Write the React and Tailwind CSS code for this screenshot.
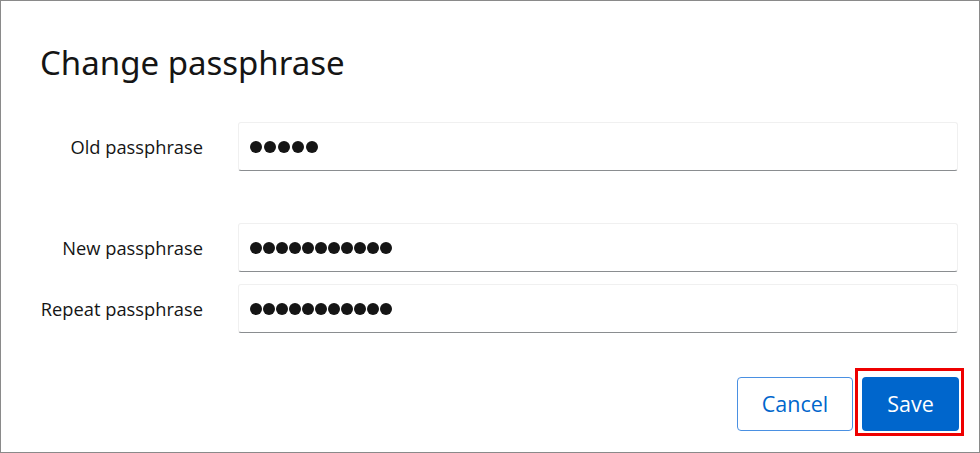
import React from "react";

function Dots({ n, gap }) {
  return (
    <div className={`flex ${gap}`}>
      {Array.from({ length: n }).map((_, i) => (
        <div key={i} className="w-[12px] h-[12px] rounded-full bg-[#151515] flex-none" />
      ))}
    </div>
  );
}

function Field({ label, n, gap }) {
  return (
    <div className="flex items-center">
      <div className="w-[164px] flex-none text-right text-[18.3px] text-[#151515]">{label}</div>
      <div className="ml-[35px] w-[720px] flex-none h-[49px] border border-[#f0f0f0] border-b-[#8a8d90] rounded-[3px] flex items-center pl-[11px] bg-white">
        <Dots n={n} gap={gap} />
      </div>
    </div>
  );
}

export default function App() {
  return (
    <div
      className="w-[980px] h-[453px] border border-[#8a8a8a] bg-white flex flex-col pl-[38px] box-border"
      style={{ fontFamily: '"Open Sans", "Noto Sans", sans-serif' }}
    >
      <h1 className="mt-[42px] ml-[1px] text-[33px] leading-[40px] text-[#151515]" style={{ fontFamily: '"Noto Sans", sans-serif' }}>
        Change passphrase
      </h1>
      <div className="mt-[39px]">
        <Field label="Old passphrase" n={5} gap="gap-[2px]" />
      </div>
      <div className="mt-[52px] flex flex-col gap-[12px]">
        <Field label="New passphrase" n={11} gap="gap-[1px]" />
        <Field label="Repeat passphrase" n={11} gap="gap-[1px]" />
      </div>
      <div className="mt-[44px] flex justify-end pr-[20px]">
        <div className="flex items-center gap-[9px]">
          <button className="flex-none w-[116px] h-[54px] border border-[#4a90e2] rounded-[4px] text-[#0066cc] text-[21.5px]">
            Cancel
          </button>
          <div className="relative flex-none">
            <button className="w-[97px] h-[54px] bg-[#0066cc] rounded-[4px] text-white text-[21.5px]">
              Save
            </button>
            <div className="absolute left-[-7px] top-[-9px] w-[109px] h-[68px] border-[3px] border-[#ee0000] pointer-events-none" />
          </div>
        </div>
      </div>
    </div>
  );
}
